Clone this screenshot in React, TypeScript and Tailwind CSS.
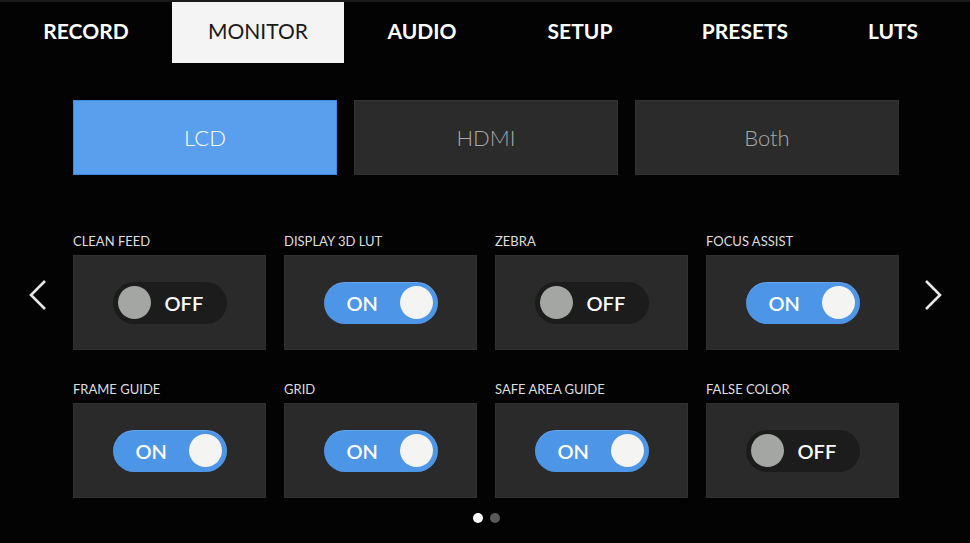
import React from 'react';

const tabs = [
  { name: 'RECORD', w: 'w-[172px]' },
  { name: 'MONITOR', w: 'w-[172px]', active: true },
  { name: 'AUDIO', w: 'w-[156px]' },
  { name: 'SETUP', w: 'w-[160px]' },
  { name: 'PRESETS', w: 'w-[170px]' },
  { name: 'LUTS', w: 'w-[126px]' },
];

const settings = [
  { label: 'CLEAN FEED', on: false },
  { label: 'DISPLAY 3D LUT', on: true },
  { label: 'ZEBRA', on: false },
  { label: 'FOCUS ASSIST', on: true },
  { label: 'FRAME GUIDE', on: true },
  { label: 'GRID', on: true },
  { label: 'SAFE AREA GUIDE', on: true },
  { label: 'FALSE COLOR', on: false },
];

const Toggle = ({ on }: { on: boolean }) =>
  on ? (
    <div className="flex items-center justify-between w-[114px] h-[42px] rounded-full bg-[#4d95e6] pl-[23px] pr-[5px] shadow-[inset_0_1px_0_rgba(255,255,255,0.15)]">
      <span className="text-white text-[20px] font-semibold">ON</span>
      <div className="w-[33px] h-[33px] rounded-full bg-[#f4f4f2]" />
    </div>
  ) : (
    <div className="flex items-center w-[114px] h-[42px] rounded-full bg-[#1c1c1c] pl-[5px] gap-[14px]">
      <div className="w-[33px] h-[33px] rounded-full bg-[#a3a6a2]" />
      <span className="text-white text-[20px] font-semibold">OFF</span>
    </div>
  );

const Chevron = ({ dir }: { dir: 'left' | 'right' }) => (
  <svg width="20" height="32" viewBox="0 0 20 32" className="text-[#e6e6e6]">
    <path
      d={dir === 'left' ? 'M17 2 L3 16 L17 30' : 'M3 2 L17 16 L3 30'}
      fill="none"
      stroke="currentColor"
      strokeWidth="2.6"
    />
  </svg>
);

export default function App() {
  return (
    <div className="w-[970px] h-[543px] bg-[#030303] overflow-hidden border-t-2 border-[#1a1a1a]" style={{ fontFamily: 'Lato, "Open Sans", sans-serif' }}>
      <div className="flex h-[61px]">
        {tabs.map((t) => (
          <div
            key={t.name}
            className={`${t.w} flex items-center justify-center pb-[4px] text-[21px] ${
              t.active ? 'bg-[#f4f4f4] text-[#1a1a1a] font-normal' : 'text-white font-bold'
            }`}
          >
            {t.name}
          </div>
        ))}
      </div>

      <div className="flex gap-[17px] pl-[73px] mt-[37px]">
        <div className="w-[264px] h-[75px] flex items-center justify-center bg-[#5a9fee] border border-[#3f8ae6] text-white text-[22px] font-light">
          LCD
        </div>
        <div className="w-[264px] h-[75px] flex items-center justify-center bg-[#2b2b2b] border border-[#333] text-[#a8a8a8] text-[22px] font-light">
          HDMI
        </div>
        <div className="w-[264px] h-[75px] flex items-center justify-center bg-[#2b2b2b] border border-[#333] text-[#a8a8a8] text-[22px] font-light">
          Both
        </div>
      </div>

      <div className="flex items-start mt-[58px]">
        <div className="w-[73px] flex justify-start pl-[28px] pt-[46px]">
          <Chevron dir="left" />
        </div>
        <div className="grid grid-cols-[193px_193px_193px_193px] gap-x-[18px] gap-y-[31px]">
          {settings.map((s) => (
            <div key={s.label} className="flex flex-col">
              <div className="text-[13px] text-[#dedede] h-[22px] leading-[16px]">{s.label}</div>
              <div className="h-[95px] bg-[#2a2a2a] border border-[#303030] flex items-center justify-center">
                <Toggle on={s.on} />
              </div>
            </div>
          ))}
        </div>
        <div className="flex-1 flex justify-start pl-[24px] pt-[46px]">
          <Chevron dir="right" />
        </div>
      </div>

      <div className="flex justify-center gap-[7px] mt-[15px] pl-[2px]">
        <div className="w-[10px] h-[10px] rounded-full bg-white" />
        <div className="w-[10px] h-[10px] rounded-full bg-[#5a5a5a]" />
      </div>
    </div>
  );
}
